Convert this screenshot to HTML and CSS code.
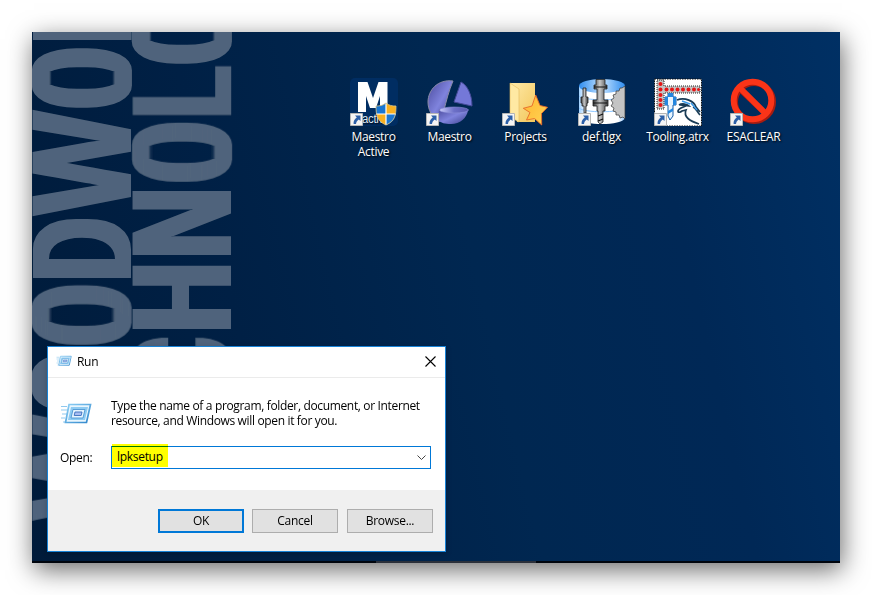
FILE: index.html
```
<!DOCTYPE html>
<html lang="en">
<head>
<meta charset="utf-8">
<title>Run</title>
<link rel="stylesheet" href="styles.css">
</head>
<body>
<svg class="defs" width="0" height="0" aria-hidden="true">
  <defs>
    <filter id="grow2" filterUnits="userSpaceOnUse" x="-20" y="-20" width="300" height="600"><feMorphology operator="dilate" radius="0 2"/></filter>
    <filter id="grow3" filterUnits="userSpaceOnUse" x="-20" y="-20" width="300" height="600"><feMorphology operator="dilate" radius="0 3"/></filter>
    <filter id="growWide" filterUnits="userSpaceOnUse" x="-20" y="-20" width="300" height="600"><feMorphology operator="dilate" radius="3 5"/></filter>
    <filter id="growRound" filterUnits="userSpaceOnUse" x="-20" y="-20" width="300" height="600"><feMorphology operator="dilate" radius="0 13"/><feMorphology operator="erode" radius="0 6"/></filter>
    <linearGradient id="runBlue" x1="0" y1="0" x2="1" y2="1"><stop offset="0" stop-color="#8fd0f5"/><stop offset="1" stop-color="#2f86cb"/></linearGradient>
    <linearGradient id="orb" x1="0" y1="0" x2="1" y2="1"><stop offset="0" stop-color="#4a4a9c"/><stop offset=".5" stop-color="#7f83dd"/><stop offset="1" stop-color="#3b3f8c"/></linearGradient>
    <linearGradient id="bowl" x1="0" y1="0" x2="1" y2="0"><stop offset="0" stop-color="#c9cbfa"/><stop offset=".5" stop-color="#6c70c8"/><stop offset="1" stop-color="#5a5ab0"/></linearGradient>
    <linearGradient id="folder" x1="0" y1="0" x2="1" y2="1"><stop offset="0" stop-color="#ffeaa8"/><stop offset="1" stop-color="#f2c75c"/></linearGradient>
    <linearGradient id="star" x1="0" y1="0" x2="1" y2="1"><stop offset="0" stop-color="#ffb52f"/><stop offset="1" stop-color="#ffd556"/></linearGradient>
    <linearGradient id="drum" x1="0" y1="0" x2="1" y2="0"><stop offset="0" stop-color="#9fd0ff"/><stop offset=".15" stop-color="#fff"/><stop offset=".85" stop-color="#fff"/><stop offset="1" stop-color="#8cc4ff"/></linearGradient>
    <linearGradient id="lid" x1="0" y1="0" x2="1" y2="0"><stop offset="0" stop-color="#2f8df0"/><stop offset=".5" stop-color="#c4e2ff"/><stop offset="1" stop-color="#2f8df0"/></linearGradient>
    <linearGradient id="steel" x1="0" y1="0" x2="1" y2="0"><stop offset="0" stop-color="#333"/><stop offset=".45" stop-color="#c8c8c8"/><stop offset="1" stop-color="#3a3a3a"/></linearGradient>
    <symbol id="shortcut" viewBox="0 0 13 13">
      <path d="M.5.5h12v12H.5z" fill="#f4f4f4" stroke="#b5b5b5"/>
      <path d="M5 2.500h5.500V8L8.800 6.400C7 7.600 6.200 9 6 11L3.600 11C3.200 8.200 4.600 6 6.800 4.400z" fill="#2c5fa8"/>
    </symbol>
    <symbol id="run" viewBox="0 0 32 24">
      <path d="M1 4.500h6M1 8h7M2 12h5M1 16h4M3 20h4" stroke="#8fc9ef" stroke-width="1.200"/>
      <path d="M9 2.500h21.500l-4 18H5.500z" fill="#e9f6fe" stroke="url(#runBlue)" stroke-width="1.700"/>
      <path d="M11 5h17l-3 13H8z" fill="#8ecbf2"/>
      <path d="M13 7.500h12l-2 8.500H11z" fill="#e6f4ff" stroke="#4d96d3" stroke-width=".9"/>
      <path d="M15 10h7l-.8 3.500h-7z" fill="#a9bcf0" stroke="#3a6fbd" stroke-width=".9"/>
    </symbol>
  </defs>
</svg>

<main class="desktop">
  <svg class="lettering" viewBox="0 0 240 529" width="240" height="529" aria-hidden="true">
    <g transform="translate(-32 -32)">
      <g class="round" filter="url(#growRound)">
        <text transform="translate(130.700 105.800) rotate(-90) scale(.595 1)">O</text>
        <text transform="translate(130.700 342.800) rotate(-90) scale(.595 1)">O</text>
        <text transform="translate(231.200 61.800) rotate(-90) scale(.595 1)">O</text>
        <text transform="translate(231.200 179.800) rotate(-90) scale(.59 1)">O</text>
      </g>
      <g class="round" filter="url(#growRound)">
        <text transform="translate(130.700 410.300) rotate(-90) scale(.595 1)">O</text>
      </g>
      <g class="wide" filter="url(#growWide)">
        <text transform="translate(127.700 280.800) rotate(-90) scale(.735 1)">D</text>
        <text transform="translate(228.200 396.700) rotate(-90) scale(.69 1)">C</text>
      </g>
      <g filter="url(#grow3)">
        <text transform="translate(130.700 42.900) rotate(-90) scale(.62 1)">R</text>
        <text transform="translate(231.200 117.600) rotate(-90) scale(.585 1)">L</text>
        <text transform="translate(231.200 258.600) rotate(-90) scale(.693 1)">N</text>
        <text transform="translate(231.200 332.500) rotate(-90) scale(.685 1)">H</text>
      </g>
      <g filter="url(#grow2)">
        <text transform="translate(130.700 214.300) rotate(-90) scale(.763 1)">W</text>
        <text transform="translate(130.700 518.800) rotate(-90) scale(.763 1)">W</text>
      </g>
    </g>
  </svg>

  <nav class="shortcuts">
    <a class="shortcut">
      <svg viewBox="0 0 48 48">
        <rect width="48" height="48" rx="5" fill="#002d62"/>
        <path d="M8 34V4h9.500l5.500 16 5.500-16h9v30h-7.500V18l-4 12h-6L16 18v16z" fill="#fff"/>
        <text class="active-tag" x="12" y="45" textLength="22" lengthAdjust="spacingAndGlyphs">activ</text>
        <path d="M36 25c3 2.500 6 3 10 3 0 9-1 15-10 19-9-4-10-10-10-19 4 0 7-.5 10-3z" fill="#f8b020"/>
        <path d="M36 25v11H26v-8c4 0 7-.5 10-3zM36 36h9.700C45 41.500 42 45 36 47z" fill="#1976d2"/>
        <path d="M36 25v22M26 36h20" stroke="#fff" stroke-width="1.200"/>
        <path d="M36 25c3 2.500 6 3 10 3 0 9-1 15-10 19-9-4-10-10-10-19 4 0 7-.5 10-3z" fill="none" stroke="#d8c48a" stroke-width=".8"/>
        <use href="#shortcut" y="35" width="13" height="13"/>
      </svg>
      <span>Maestro<br>Active</span>
    </a>
    <a class="shortcut">
      <svg viewBox="0 0 48 48">
        <path d="M27 3C12 1 2 12 2 24c0 8 4 15 11 20 2-4 4-9 5-12 2-8 5-20 9-29z" fill="url(#orb)" stroke="#8b8ca8"/>
        <path d="M35 4c6 3 11 12 11 24L28 24z" fill="#7478d8" stroke="#454a98"/>
        <path d="M13 31c8 2 20 3 29 1-1 8-8 14-17 14-6 0-10-1-13-4z" fill="url(#orb)"/>
        <ellipse cx="28" cy="32" rx="14.500" ry="3" fill="url(#bowl)" stroke="#8b8ed8" stroke-width=".6"/>
        <use href="#shortcut" y="35" width="13" height="13"/>
      </svg>
      <span>Maestro</span>
    </a>
    <a class="shortcut">
      <svg viewBox="0 0 48 48">
        <path d="M8 5h25v39H15z" fill="url(#folder)"/>
        <path d="M8 5l9 6v33l-9-5z" fill="#ffe9a3" stroke="#e2ba5c" stroke-width=".6"/>
        <path d="M33.700 17L38 27.500l7.500 1.800-6 6.200.2 11.500-7.200-6.500-8 1.500L28 34.500l-6.700-4.200L30 28z" fill="url(#star)" stroke="#e86a2a" stroke-width=".9"/>
        <use href="#shortcut" y="35" width="13" height="13"/>
      </svg>
      <span>Projects</span>
    </a>
    <a class="shortcut">
      <svg viewBox="0 0 48 48">
        <path d="M1 8v32c3 8 43 8 46 0V8z" fill="url(#drum)"/>
        <ellipse cx="24" cy="8" rx="23" ry="7" fill="url(#lid)"/>
        <path d="M1 18c5 5 41 5 46 0M1 30c5 5 41 5 46 0" fill="none" stroke="#8cc6ff"/>
        <path d="M47 8l-3 2-2 0-1 3-3 0 0 3-3 1 1 3-3 2 2 3-2 3 3 2-1 3 3 1 0 3 3 0 1 3 3-1 2 2z" fill="#c4c4c4" stroke="#333" stroke-width=".7"/>
        <path d="M5 10h3v9h2v6H9v3H8v7H6v-7H4v-3H3v-6h2z" fill="url(#steel)" stroke="#222" stroke-width=".8"/>
        <path d="M18 1.500h9V7h2v4h-3v11h4v6h-3v5h-2v11l-3 2-2-2V33h-1v-5h-4v-6h4V11h-3V7h2z" fill="url(#steel)" stroke="#222" stroke-width=".8"/>
        <path d="M16 9h13M15 25h14M20 38l5-2M20 43l5-2" stroke="#111" stroke-width="1.200"/>
        <use href="#shortcut" y="35" width="13" height="13"/>
      </svg>
      <span>def.tlgx</span>
    </a>
    <a class="shortcut">
      <svg viewBox="0 0 48 48">
        <rect x=".5" y="1" width="47" height="47" fill="#fff" stroke="#111" stroke-dasharray="1.500 1"/>
        <path d="M3 2h7v6h36v7H10v16H3z" fill="#c4c4c4" stroke="#222" stroke-dasharray="1 1"/>
        <g fill="#e51616"><circle cx="6.500" cy="6" r="2"/><circle cx="6.500" cy="11.500" r="2"/><circle cx="6.500" cy="17" r="2"/><circle cx="6.500" cy="22" r="2"/><circle cx="6.500" cy="27" r="2"/><circle cx="12.500" cy="11.500" r="2"/><circle cx="18" cy="11.500" r="2"/><circle cx="23.500" cy="11.500" r="2"/><circle cx="29" cy="11.500" r="2"/><circle cx="34.500" cy="11.500" r="2"/><circle cx="40" cy="11.500" r="2"/><circle cx="44.500" cy="11.500" r="1.500"/></g>
        <path d="M14 16h5v3h3v8h-3v11l-3 4-2-4V27h-3v-8h3z" fill="#e9f5ff" stroke="#145da8"/>
        <path d="M11 19h3v8h-3zM19 19h3v8h-3zM14 15h5v4h-5zM14 33l5-3v3l-5 3z" fill="#2487df"/>
        <path d="M23 22c8-3 17 1 19 7l4 5M25 27c3-2 8-1 10 1l-9-1M34 27l-7 3c-5 3-3 6 1 3l4-1c-3 7 4 11 13 14M39 29c3 1 4 5 7 8" fill="none" stroke="#193b55" stroke-width="1.700"/>
        <path d="M28 23l8 3M37 25l6 7" stroke="#3c9bea" stroke-width="1.500"/>
        <use href="#shortcut" y="35" width="13" height="13"/>
      </svg>
      <span>Tooling.atrx</span>
    </a>
    <a class="shortcut">
      <svg viewBox="0 0 48 48">
        <g fill="none" stroke-width="6">
          <g stroke="#a81c10"><circle cx="24" cy="24" r="19"/><path d="M10.500 11.500l27 26"/></g>
          <g stroke="#fb3418"><circle cx="22.500" cy="22.500" r="18.800"/><path d="M9.500 9.500l26 26"/></g>
        </g>
        <use href="#shortcut" y="35" width="13" height="13"/>
      </svg>
      <span>ESACLEAR</span>
    </a>
  </nav>

  <section class="dialog">
    <header class="titlebar">
      <svg class="title-icon" viewBox="0 0 32 24"><use href="#run"/></svg>
      <h1>Run</h1>
      <svg class="close" viewBox="0 0 11 11"><path d="M.5.5l10 10M10.500.5l-10 10" stroke="#000" stroke-width="1.100"/></svg>
    </header>
    <div class="content">
      <svg class="run-icon" viewBox="0 0 32 24"><use href="#run"/></svg>
      <p>Type the name of a program, folder, document, or Internet<br>resource, and Windows will open it for you.</p>
      <label>Open:</label>
      <div class="combo">
        <span class="value">lpksetup</span>
        <svg class="chevron" viewBox="0 0 9 5"><path d="M.5.5l4 4 4-4" fill="none" stroke="#444"/></svg>
      </div>
    </div>
    <footer class="actions">
      <button class="primary">OK</button>
      <button>Cancel</button>
      <button>Browse...</button>
    </footer>
  </section>
  <div class="taskbar"><i></i></div>
</main>
</body>
</html>
```
FILE: styles.css
```
* { box-sizing: border-box; }
body {
  margin: 0;
  padding: 32px;
  height: 595px;
  overflow: hidden;
  background: #fff;
  font: 12px/15px "Open Sans", "Noto Sans", sans-serif;
  letter-spacing: -.3px;
  color: #000;
}
.defs { position: absolute; }
.desktop {
  position: relative;
  display: flex;
  flex-direction: column;
  width: 808px;
  height: 531px;
  background: linear-gradient(77deg, #001b3a 0%, #002045 28%, #002751 55%, #002856 78%, #003064 100%);
  box-shadow: 2px 7px 24px rgba(0, 0, 0, .58);
}
.lettering { position: absolute; left: 0; top: 0; letter-spacing: 0; }
.lettering text {
  font: bold 142.400px "Liberation Sans", sans-serif;
  fill: #50647b;
}
.lettering .round text { font: 300 137.800px Roboto, sans-serif; }
.lettering .wide text { font: 129.400px Roboto, sans-serif; }
.shortcuts {
  display: flex;
  margin: 46px 0 0 304px;
  height: 268px;
}
.shortcut {
  position: relative;
  width: 76px;
  display: flex;
  flex-direction: column;
  align-items: center;
  color: #fff;
  text-align: center;
  white-space: nowrap;
  text-shadow: 1px 1px 2px #000;
}
.shortcut svg { width: 48px; height: 48px; margin-bottom: 3px; }
.shortcut span { margin-left: -1px; }
.active-tag { font: 12px "Liberation Sans", sans-serif; fill: #dce6f2; }
.dialog {
  position: relative;
  width: 399px;
  height: 206px;
  margin-left: 15px;
  background: #fff;
  border: 1px solid #1883d7;
  box-shadow: 0 2px 6px rgba(0, 0, 0, .2);
}
.titlebar {
  display: flex;
  align-items: center;
  height: 31px;
  padding: 0 9px 0 8px;
  border-bottom: 1px solid #ebebeb;
}
.title-icon { width: 16px; height: 12px; margin-top: -2px; }
h1 { margin: -2px 0 0 5px; font-size: 12px; font-weight: 400; }
.close { width: 11px; height: 11px; margin: -2px 0 0 auto; }
.content {
  display: grid;
  grid-template-columns: 51px 320px;
  grid-template-rows: 48px 23px;
  height: 112px;
  padding: 20px 0 0 12px;
}
.run-icon { width: 32px; height: 24px; margin-top: 4px; }
p { margin: 0; white-space: nowrap; letter-spacing: -.345px; }
label { align-self: center; }
.combo {
  display: flex;
  align-items: center;
  border: 1px solid #0078d7;
  height: 23px;
}
.value {
  align-self: flex-start;
  height: 23px;
  margin-top: -3px;
  padding: 5px 5px 0;
  background: #ff0;
  width: 56px;
  mix-blend-mode: multiply;
}
.chevron { width: 9px; height: 5px; margin: 0 4px 0 auto; }
.actions {
  display: flex;
  justify-content: flex-end;
  gap: 9px;
  height: 61px;
  padding: 19px 12px 0 0;
  background: #f0f0f0;
}
button {
  width: 86px;
  height: 24px;
  padding: 0 0 1px;
  border: 1px solid #adadad;
  background: #e1e1e1;
  font: inherit;
  letter-spacing: inherit;
  color: inherit;
}
.primary { border: 2px solid #0078d7; margin-right: -1px; }
.taskbar { margin-top: auto; height: 2px; background: #00050d; }
.taskbar i { display: block; width: 160px; height: 2px; margin-left: 344px; background: #2b303a; }
```
